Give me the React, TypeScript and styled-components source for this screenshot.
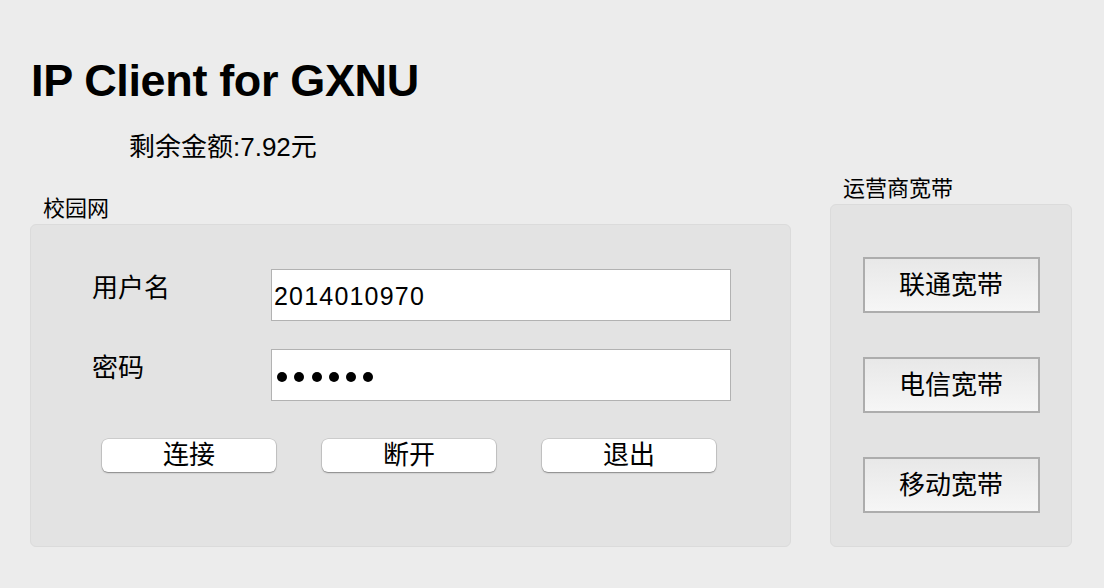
import React from "react";
import styled, { createGlobalStyle } from "styled-components";

const GlobalStyle = createGlobalStyle`
  html, body {
    margin: 0;
    padding: 0;
    background: #ececec;
  }
  body {
    font-family: "Liberation Sans", "Noto Sans CJK SC", sans-serif;
    color: #000;
  }
`;

const Page = styled.div`
  box-sizing: border-box;
  width: 1104px;
  height: 588px;
  padding: 58px 33px 41px 30px;
  display: flex;
  flex-direction: column;
  background: #ececec;
`;

const Title = styled.h1`
  margin: 0 0 0 1px;
  font-size: 45px;
  line-height: 45px;
  font-weight: bold;
  letter-spacing: -0.35px;
`;

const Balance = styled.div`
  margin: 31px 0 0 99px;
  font-size: 26px;
  line-height: 26px;
`;

const PanelsRow = styled.div`
  margin-top: auto;
  display: flex;
  align-items: flex-end;
  gap: 39px;
`;

const Column = styled.section`
  display: flex;
  flex-direction: column;
`;

const GroupLabel = styled.div`
  font-size: 22px;
  line-height: 22px;
  margin: 0 0 4px 13px;
`;

const Panel = styled.div<{ $w: number; $h: number }>`
  box-sizing: border-box;
  width: ${(p) => p.$w}px;
  height: ${(p) => p.$h}px;
  background: #e3e3e3;
  border: 1px solid #dbdbdb;
  border-radius: 6px;
`;

const CampusPanel = styled(Panel)`
  padding: 44px 0 0 61px;
`;

const CarrierPanel = styled(Panel)`
  padding-top: 52px;
  display: flex;
  flex-direction: column;
  align-items: center;
  gap: 44px;
`;

const FormGrid = styled.div`
  display: grid;
  grid-template-columns: 179px 460px;
  row-gap: 28px;
`;

const FieldLabel = styled.label`
  font-size: 26px;
  line-height: 26px;
  padding-top: 6px;
`;

const Field = styled.div`
  box-sizing: border-box;
  width: 460px;
  height: 52px;
  background: #fff;
  border: 1px solid #b2b2b2;
  display: flex;
  align-items: center;
`;

const TextValue = styled.span`
  padding: 2px 0 0 2px;
  font-size: 25px;
  letter-spacing: 1.2px;
`;

const Dots = styled.div`
  display: flex;
  gap: 7.3px;
  padding: 3px 0 0 5px;
`;

const Dot = styled.span`
  width: 10px;
  height: 10px;
  border-radius: 50%;
  background: #000;
`;

const ButtonRow = styled.div`
  grid-column: 1 / -1;
  display: flex;
  gap: 46px;
  margin: 10px 0 0 10px;
`;

const PushButton = styled.button`
  box-sizing: border-box;
  width: 174px;
  height: 33px;
  padding: 0;
  border: none;
  border-radius: 6px;
  background: #fff;
  box-shadow: 0 0 0 0.5px rgba(0, 0, 0, 0.18), 0 1px 1.5px rgba(0, 0, 0, 0.35);
  font-family: inherit;
  font-size: 26px;
  line-height: 33px;
  color: #000;
  display: flex;
  align-items: center;
  justify-content: center;
`;

const CarrierButton = styled.button`
  box-sizing: border-box;
  width: 177px;
  height: 56px;
  padding: 0;
  border: 2px solid #adadad;
  border-radius: 0;
  background: linear-gradient(#e8e8e8, #f6f6f6);
  font-family: inherit;
  font-size: 26px;
  line-height: 26px;
  color: #000;
  display: flex;
  align-items: center;
  justify-content: center;
`;

export default function App() {
  return (
    <>
      <GlobalStyle />
      <Page>
        <Title>IP Client for GXNU</Title>
        <Balance>剩余金额:7.92元</Balance>
        <PanelsRow>
          <Column>
            <GroupLabel>校园网</GroupLabel>
            <CampusPanel $w={761} $h={323}>
              <FormGrid>
                <FieldLabel>用户名</FieldLabel>
                <Field>
                  <TextValue>2014010970</TextValue>
                </Field>
                <FieldLabel>密码</FieldLabel>
                <Field>
                  <Dots>
                    {Array.from({ length: 6 }).map((_, i) => (
                      <Dot key={i} />
                    ))}
                  </Dots>
                </Field>
                <ButtonRow>
                  <PushButton>连接</PushButton>
                  <PushButton>断开</PushButton>
                  <PushButton>退出</PushButton>
                </ButtonRow>
              </FormGrid>
            </CampusPanel>
          </Column>
          <Column>
            <GroupLabel>运营商宽带</GroupLabel>
            <CarrierPanel $w={242} $h={343}>
              <CarrierButton>联通宽带</CarrierButton>
              <CarrierButton>电信宽带</CarrierButton>
              <CarrierButton>移动宽带</CarrierButton>
            </CarrierPanel>
          </Column>
        </PanelsRow>
      </Page>
    </>
  );
}
